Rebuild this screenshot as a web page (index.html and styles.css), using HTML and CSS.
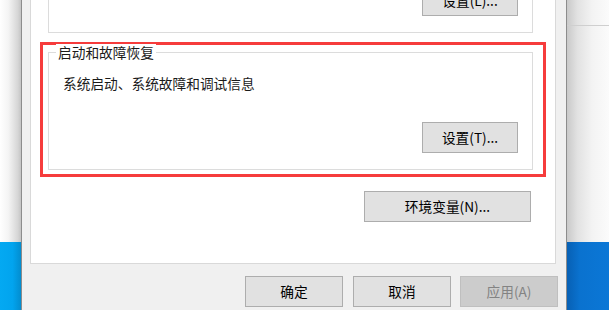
FILE: index.html
```html
<!DOCTYPE html>
<html lang="zh-CN">
<head>
<meta charset="utf-8">
<title>系统属性</title>
<link rel="stylesheet" href="styles.css">
</head>
<body>
<div class="screen">
  <div class="side side-left">
    <div class="side-top"></div>
    <div class="side-blue"></div>
  </div>
  <div class="dialog">
    <div class="panel">
      <div class="group group-top">
        <button class="btn btn-top">设置(L)...</button>
      </div>
      <div class="highlight">
        <div class="group group-main">
          <span class="legend">启动和故障恢复</span>
          <p class="desc">系统启动、系统故障和调试信息</p>
          <button class="btn btn-settings">设置(T)...</button>
        </div>
      </div>
      <div class="env-row">
        <button class="btn btn-env">环境变量(N)...</button>
      </div>
    </div>
    <div class="footer">
      <button class="btn btn-foot btn-ok">确定</button>
      <button class="btn btn-foot">取消</button>
      <button class="btn btn-foot btn-disabled">应用(A)</button>
    </div>
  </div>
  <div class="side side-right">
    <div class="side-top"><div class="bg-line"></div></div>
    <div class="side-blue"></div>
  </div>
</div>
</body>
</html>
```
FILE: styles.css
```css
* { box-sizing: border-box; }
html, body {
  margin: 0;
  padding: 0;
  width: 609px;
  height: 310px;
  overflow: hidden;
  background: #fff;
}
body {
  font-family: "Noto Sans CJK SC", "Microsoft YaHei", sans-serif;
  font-size: 13.7px;
  color: #000;
}
.screen {
  display: flex;
  width: 609px;
  height: 310px;
}
.side {
  display: flex;
  flex-direction: column;
}
.side-left { width: 21px; }
.side-right { width: 42px; }
.side-top { height: 242px; }
.side-blue { flex: 1; }
.side-left .side-top {
  background: linear-gradient(to right, #ffffff 0%, #f4f4f4 40%, #d6d6d6 85%, #c4c4c4 100%);
}
.side-left .side-blue {
  background: linear-gradient(to right, #04a9f2 0%, #02a4ee 60%, #038dcf 100%);
}
.side-right .side-top {
  background: linear-gradient(to right, #c9c9c9 0%, #e2e2e2 25%, #f3f3f3 60%, #fbfbfb 100%);
}
.bg-line {
  height: 26px;
  border-bottom: 1px solid #cfcfcf;
}
.side-right .side-blue {
  background: linear-gradient(to right, #0760b4 0%, #0a72cf 30%, #0b77d6 100%);
}
.dialog {
  width: 546px;
  height: 310px;
  background: #f0f0f0;
  border-left: 1px solid #8c8c8c;
  border-right: 1px solid #8c8c8c;
  display: flex;
  flex-direction: column;
}
.panel {
  margin-left: 8px;
  width: 526px;
  height: 264px;
  background: #fff;
  border: 1px solid #d9d9d9;
  border-top: none;
  display: flex;
  flex-direction: column;
}
.group {
  border: 1px solid #dcdcdc;
  width: 485px;
}
.group-top {
  margin-left: 17px;
  height: 33px;
  border-top: none;
  display: flex;
  justify-content: flex-end;
  align-items: flex-start;
  overflow: visible;
}
.btn {
  font-family: inherit;
  font-size: 13.7px;
  color: #000;
  background: #e1e1e1;
  border: 1px solid #adadad;
  padding: 0;
  margin: 0;
  height: 31px;
  line-height: 29px;
  text-align: center;
}
.btn-top {
  width: 96px;
  margin-top: -15px;
  margin-right: 14px;
}
.highlight {
  margin-top: 9px;
  margin-left: 9px;
  width: 506px;
  height: 135px;
  border: 3px solid #f63c3c;
  padding: 7px 0 0 5px;
}
.group-main {
  height: 118px;
  display: flex;
  flex-direction: column;
  align-items: flex-start;
}
.legend {
  margin-top: -9px;
  margin-left: 7px;
  padding: 0 2px;
  line-height: 16px;
  background: #fff;
  color: #1a1a1a;
}
.desc {
  margin: 15px 0 0 14px;
  line-height: 16px;
  color: #1a1a1a;
}
.btn-settings {
  align-self: flex-end;
  width: 96px;
  margin-top: 31px;
  margin-right: 14px;
}
.env-row {
  display: flex;
  justify-content: flex-end;
  margin-top: 14px;
  padding-right: 24px;
}
.btn-env {
  width: 167px;
}
.footer {
  display: flex;
  justify-content: flex-end;
  gap: 9px;
  padding-top: 12px;
  padding-right: 8px;
}
.btn-foot {
  width: 98px;
}
.btn-ok {
  margin-right: 1px;
}
.btn-disabled {
  background: #cccccc;
  border-color: #bfbfbf;
  color: #838383;
}
```
